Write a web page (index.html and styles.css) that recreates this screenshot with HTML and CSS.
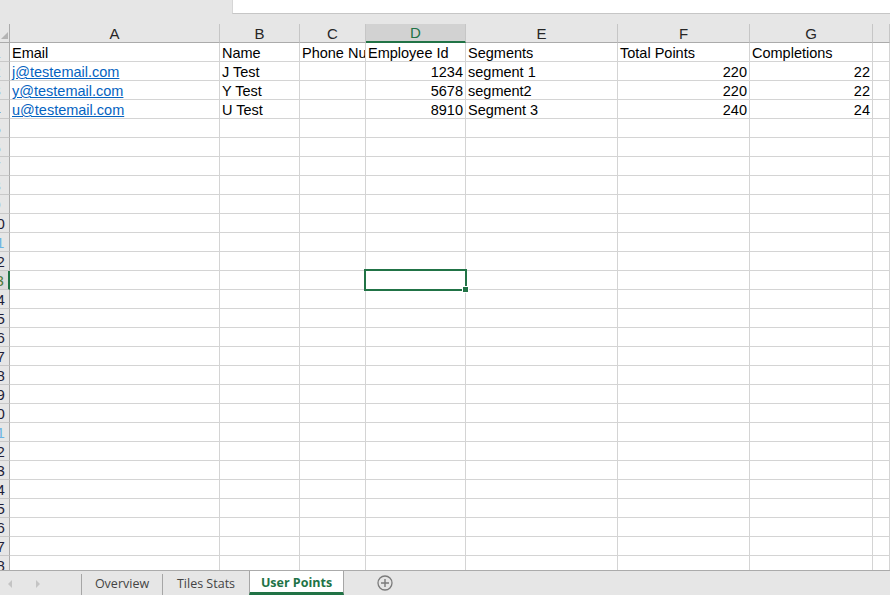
FILE: index.html
```html
<!DOCTYPE html>
<html>
<head>
<meta charset="utf-8">
<link rel="stylesheet" href="styles.css">
</head>
<body>
<div class="app">
  <div class="topbar"><div class="fbox"></div></div>
  <div class="sheet">
    <div class="row hdr">
      <div class="corner"><svg width="7" height="7" viewBox="0 0 7 7"><polygon points="7,0 7,7 0,7" fill="#b4b4b4"/></svg></div>
      <div>A</div><div>B</div><div>C</div><div class="hsel">D</div><div>E</div><div>F</div><div>G</div><div></div>
    </div>
    <div class="row"><div class="rh"><span>1</span></div><div>Email</div><div>Name</div><div>Phone Number</div><div>Employee Id</div><div>Segments</div><div>Total Points</div><div>Completions</div><div></div></div>
    <div class="row"><div class="rh"><span>2</span></div><div><span class="link">j@testemail.com</span></div><div>J Test</div><div></div><div class="num">1234</div><div>segment 1</div><div class="num">220</div><div class="num">22</div><div></div></div>
    <div class="row"><div class="rh"><span>3</span></div><div><span class="link">y@testemail.com</span></div><div>Y Test</div><div></div><div class="num">5678</div><div>segment2</div><div class="num">220</div><div class="num">22</div><div></div></div>
    <div class="row"><div class="rh"><span>4</span></div><div><span class="link">u@testemail.com</span></div><div>U Test</div><div></div><div class="num">8910</div><div>Segment 3</div><div class="num">240</div><div class="num">24</div><div></div></div>
    <div class="row"><div class="rh"><span>5</span></div><div></div><div></div><div></div><div></div><div></div><div></div><div></div><div></div></div>
    <div class="row"><div class="rh"><span>6</span></div><div></div><div></div><div></div><div></div><div></div><div></div><div></div><div></div></div>
    <div class="row"><div class="rh"><span>7</span></div><div></div><div></div><div></div><div></div><div></div><div></div><div></div><div></div></div>
    <div class="row"><div class="rh"><span>8</span></div><div></div><div></div><div></div><div></div><div></div><div></div><div></div><div></div></div>
    <div class="row"><div class="rh"><span>9</span></div><div></div><div></div><div></div><div></div><div></div><div></div><div></div><div></div></div>
    <div class="row"><div class="rh"><span>10</span></div><div></div><div></div><div></div><div></div><div></div><div></div><div></div><div></div></div>
    <div class="row"><div class="rh blue"><span>11</span></div><div></div><div></div><div></div><div></div><div></div><div></div><div></div><div></div></div>
    <div class="row"><div class="rh"><span>12</span></div><div></div><div></div><div></div><div></div><div></div><div></div><div></div><div></div></div>
    <div class="row"><div class="rh rsel"><span>13</span></div><div></div><div></div><div></div><div class="sel"></div><div></div><div></div><div></div><div></div></div>
    <div class="row"><div class="rh"><span>14</span></div><div></div><div></div><div></div><div></div><div></div><div></div><div></div><div></div></div>
    <div class="row"><div class="rh"><span>15</span></div><div></div><div></div><div></div><div></div><div></div><div></div><div></div><div></div></div>
    <div class="row"><div class="rh"><span>16</span></div><div></div><div></div><div></div><div></div><div></div><div></div><div></div><div></div></div>
    <div class="row"><div class="rh"><span>17</span></div><div></div><div></div><div></div><div></div><div></div><div></div><div></div><div></div></div>
    <div class="row"><div class="rh"><span>18</span></div><div></div><div></div><div></div><div></div><div></div><div></div><div></div><div></div></div>
    <div class="row"><div class="rh"><span>19</span></div><div></div><div></div><div></div><div></div><div></div><div></div><div></div><div></div></div>
    <div class="row"><div class="rh"><span>20</span></div><div></div><div></div><div></div><div></div><div></div><div></div><div></div><div></div></div>
    <div class="row"><div class="rh blue"><span>21</span></div><div></div><div></div><div></div><div></div><div></div><div></div><div></div><div></div></div>
    <div class="row"><div class="rh"><span>22</span></div><div></div><div></div><div></div><div></div><div></div><div></div><div></div><div></div></div>
    <div class="row"><div class="rh"><span>23</span></div><div></div><div></div><div></div><div></div><div></div><div></div><div></div><div></div></div>
    <div class="row"><div class="rh"><span>24</span></div><div></div><div></div><div></div><div></div><div></div><div></div><div></div><div></div></div>
    <div class="row"><div class="rh"><span>25</span></div><div></div><div></div><div></div><div></div><div></div><div></div><div></div><div></div></div>
    <div class="row"><div class="rh"><span>26</span></div><div></div><div></div><div></div><div></div><div></div><div></div><div></div><div></div></div>
    <div class="row"><div class="rh"><span>27</span></div><div></div><div></div><div></div><div></div><div></div><div></div><div></div><div></div></div>
    <div class="row"><div class="rh"><span>28</span></div><div></div><div></div><div></div><div></div><div></div><div></div><div></div><div></div></div>
  </div>
  <div class="tabbar">
    <div class="nav">
      <svg width="81" height="24" viewBox="0 0 81 24"><polygon points="12,9 12,17 8,13" fill="#c4c4c4"/><polygon points="36,9 36,17 40,13" fill="#c4c4c4"/></svg>
    </div>
    <div class="tab t1">Overview</div>
    <div class="tab t2">Tiles Stats</div>
    <div class="tab active">User Points</div>
    <div class="add"><svg width="16" height="16" viewBox="0 0 16 16"><circle cx="8" cy="8" r="7" fill="none" stroke="#7b7b7b" stroke-width="1.3"/><path d="M8 4v8M4 8h8" stroke="#7b7b7b" stroke-width="1.4"/></svg></div>
  </div>
</div>
</body>
</html>
```
FILE: styles.css
```css
html, body {
  margin: 0;
  padding: 0;
}
body {
  width: 890px;
  height: 595px;
  overflow: hidden;
  background: #ffffff;
  font-family: "Liberation Sans", Arial, sans-serif;
}
.app {
  display: flex;
  flex-direction: column;
  width: 890px;
  height: 595px;
}
.topbar {
  height: 24px;
  flex: none;
  background: #e6e6e6;
  display: flex;
  justify-content: flex-end;
  align-items: flex-start;
}
.fbox {
  width: 658px;
  height: 14px;
  box-sizing: border-box;
  background: #ffffff;
  border-left: 1px solid #d6d6d6;
  border-bottom: 1px solid #c6c6c6;
}
.sheet {
  flex: 1;
  overflow: hidden;
  background: #ffffff;
}
.row {
  display: grid;
  grid-template-columns: 10px 210px 80px 66px 100px 152px 132px 123px 1fr;
  height: 19px;
}
.row > div {
  box-sizing: border-box;
  border-right: 1px solid #d4d4d4;
  border-bottom: 1px solid #d4d4d4;
  overflow: hidden;
  white-space: nowrap;
  display: flex;
  align-items: flex-end;
  padding: 0 2px 0 2px;
  font-size: 14.5px;
  line-height: 15px;
  color: #000000;
}
.row > div.num {
  justify-content: flex-end;
}
.link {
  color: #0563c1;
  text-decoration: underline;
}
.hdr > div {
  background: #e6e6e6;
  border-right: 1px solid #c6c6c6;
  border-bottom: 1px solid #ababab;
  justify-content: center;
  align-items: center;
  font-size: 15px;
  line-height: 17px;
  color: #262626;
  padding: 0;
}
.hdr > div.corner {
  justify-content: flex-end;
  align-items: flex-end;
  padding: 0 1px 3px 0;
  border-right: 1px solid #ababab;
}
.corner svg {
  display: block;
}
.hdr > div.hsel {
  background: #d2d2d2;
  color: #217346;
  border-bottom: 2px solid #217346;
}
.row > div.rh {
  background: #e6e6e6;
  border-right: 1px solid #ababab;
  border-bottom: 1px solid #c8c8c8;
  justify-content: flex-end;
  align-items: center;
  padding: 0;
  font-size: 15px;
  line-height: 17px;
  color: #1f1f3a;
}
.rh span {
  flex: none;
  width: 25px;
  text-align: center;
}
.row > div.rh.blue {
  color: #6bb4e4;
}
.row > div.rh.rsel {
  background: #dcdcdc;
  color: #4f7a3a;
  border-right: 2px solid #217346;
}
.row > div.sel {
  position: relative;
  overflow: visible;
}
.sel::after {
  content: "";
  position: absolute;
  left: -2px;
  right: -2px;
  top: -2px;
  bottom: -2px;
  border: 2px solid #217346;
  z-index: 2;
}
.sel::before {
  content: "";
  position: absolute;
  right: -4px;
  bottom: -4px;
  width: 7px;
  height: 7px;
  box-sizing: border-box;
  background: #217346;
  border: 1px solid #ffffff;
  z-index: 3;
}
.tabbar {
  height: 25px;
  flex: none;
  box-sizing: border-box;
  background: #e6e6e6;
  border-top: 1px solid #ababab;
  display: flex;
  align-items: stretch;
  font-family: "Open Sans", "Noto Sans", sans-serif;
  font-size: 12.5px;
}
.nav {
  width: 81px;
  flex: none;
}
.nav svg {
  display: block;
}
.tab {
  flex: none;
  box-sizing: border-box;
  display: flex;
  align-items: center;
  justify-content: center;
  color: #444444;
  border-left: 1px solid #a6a6a6;
  margin-top: 3px;
  padding-bottom: 3px;
}
.t1 {
  width: 81px;
}
.t2 {
  width: 87px;
}
.tab.active {
  width: 95px;
  margin-top: 0;
  padding-bottom: 0;
  padding-top: 2px;
  background: #ffffff;
  border-right: 1px solid #a6a6a6;
  border-bottom: 3px solid #217346;
  color: #217346;
  font-weight: bold;
}
.add {
  flex: none;
  margin-left: 33px;
  display: flex;
  align-items: center;
}
.add svg {
  display: block;
}
```
